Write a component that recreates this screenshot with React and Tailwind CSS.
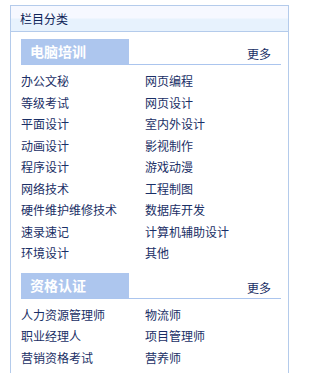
const groups = [
  {
    title: "电脑培训",
    items: [
      "办公文秘", "网页编程",
      "等级考试", "网页设计",
      "平面设计", "室内外设计",
      "动画设计", "影视制作",
      "程序设计", "游戏动漫",
      "网络技术", "工程制图",
      "硬件维护维修技术", "数据库开发",
      "速录速记", "计算机辅助设计",
      "环境设计", "其他",
    ],
  },
  {
    title: "资格认证",
    items: [
      "人力资源管理师", "物流师",
      "职业经理人", "项目管理师",
      "营销资格考试", "营养师",
    ],
  },
];

function Group({ title, items }) {
  return (
    <div className="mb-[9px]">
      <div className="flex items-end justify-between border-b border-[#abc5ee]">
        <div className="w-[108px] h-[25px] bg-[#adc6ee] pl-[9px] flex items-center text-[14px] font-bold text-white">
          {title}
        </div>
        <a href="#" className="text-[12px] text-[#1a2f66] mr-[10px] mb-[4px] leading-none">
          更多
        </a>
      </div>
      <ul className="grid grid-cols-[124px_1fr] mt-[5px]">
        {items.map((it, i) => (
          <li key={i} className="h-[21.5px] leading-[21.5px] text-[12px] text-[#1a2f66] whitespace-nowrap">
            {it}
          </li>
        ))}
      </ul>
    </div>
  );
}

export default function App() {
  return (
    <div
      className="w-[295px] h-[373px] bg-white pt-[5px] pl-[10px] overflow-hidden"
      style={{ fontFamily: '"Noto Sans CJK SC", "Noto Sans", sans-serif' }}
    >
      <div className="w-[279px] border-x border-t border-[#b4cbeb] min-h-[380px]">
        <div className="h-[26px] border-b border-[#b4cbeb] bg-[linear-gradient(#f6f8ff_0%,#f6f8ff_48%,#e7f2fd_52%,#e7f2fd_100%)] pl-[9px] flex items-center text-[12px] text-[#0f2458]">
          栏目分类
        </div>
        <div className="pt-[7px] pl-[10px] pr-[7px]">
          {groups.map((g) => (
            <Group key={g.title} {...g} />
          ))}
        </div>
      </div>
    </div>
  );
}
